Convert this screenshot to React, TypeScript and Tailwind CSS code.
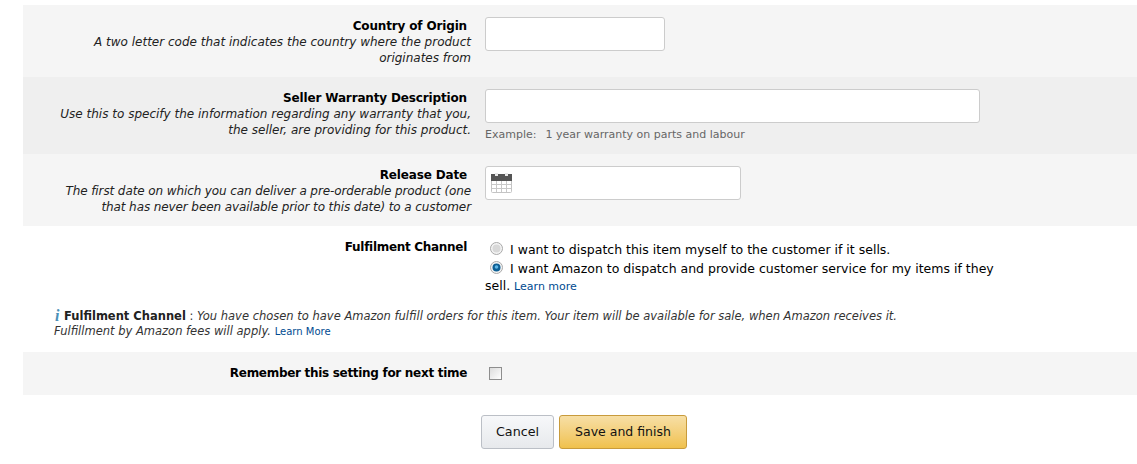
const font = { fontFamily: '"DejaVu Sans", Verdana, sans-serif' }

function Label({ title, children, tight }: { title: string; children?: React.ReactNode; tight?: boolean }) {
  return (
    <div className="w-[448px] shrink-0 pt-[1px] text-right text-[12px] leading-4 text-[#111]">
      <div className={tight ? 'pr-1 font-bold tracking-[-0.3px] text-black' : 'pr-1 font-bold tracking-[-0.15px] text-black'}>
        {title}
      </div>
      {children && <div className="italic text-[#222]">{children}</div>}
    </div>
  )
}

function Calendar() {
  return (
    <svg width="21" height="21" viewBox="0 0 21 21" className="shrink-0">
      <rect x="0.5" y="2.5" width="20" height="18" rx="1" fill="#fff" stroke="#c4c4c4" />
      <rect x="0" y="2" width="21" height="7" fill="#555" />
      <rect x="4" y="1" width="3" height="3" fill="#e8e8e8" />
      <rect x="14" y="1" width="3" height="3" fill="#e8e8e8" />
      <path d="M5.5 9v11M10.5 9v11M15.5 9v11M1 12.5h19M1 16.5h19" stroke="#c8c8c8" fill="none" />
    </svg>
  )
}

function Radio({ checked }: { checked?: boolean }) {
  return (
    <svg width="13" height="13" viewBox="0 0 13 13" className="absolute top-[1px] left-[5px]">
      <circle cx="6.5" cy="6.5" r="6" fill="#f4f4f4" stroke="#a8a8a8" />
      {checked ? (
        <>
          <circle cx="6.5" cy="6.5" r="4" fill="#0d5f94" />
          <circle cx="6.5" cy="6" r="1.8" fill="#5db6e6" />
        </>
      ) : (
        <circle cx="6.5" cy="6.5" r="4" fill="#d8d8d8" />
      )}
    </svg>
  )
}

export default function App() {
  return (
    <div className="h-[464px] w-[1137px] overflow-hidden bg-white pt-[5px]" style={font}>
      <div className="ml-[23px]">
        <div className="flex h-[72px] gap-[14px] bg-[#f5f5f5] pt-[12px]">
          <Label title="Country of Origin">
            A two letter code that indicates the country where the product
            <br />
            originates from
          </Label>
          <input className="h-[34px] w-[180px] rounded-[3px] border border-[#ccc] bg-white" />
        </div>

        <div className="flex h-[77px] gap-[14px] bg-[#efefef] pt-[12px]">
          <Label title="Seller Warranty Description">
            Use this to specify the information regarding any warranty that you,
            <br />
            the seller, are providing for this product.
          </Label>
          <div>
            <input className="block h-[34px] w-[495px] rounded-[3px] border border-[#ccc] bg-white" />
            <div className="mt-[5px] text-[11px] leading-[14px] text-[#666]">
              <span className="mr-[2px]">Example:</span>&nbsp; 1 year warranty on parts and labour
            </div>
          </div>
        </div>

        <div className="flex h-[72px] gap-[14px] bg-[#f5f5f5] pt-[12px]">
          <Label title="Release Date">
            <span className="tracking-[-0.1px]">
              The first date on which you can deliver a pre-orderable product (one
              <br />
              that has never been available prior to this date) to a customer
            </span>
          </Label>
          <div className="flex h-[34px] w-[256px] items-start rounded-[3px] border border-[#ccc] bg-white pt-[5px] pl-[5px]">
            <Calendar />
          </div>
        </div>

        <div className="flex gap-[14px] pt-[12px]">
          <Label title="Fulfilment Channel" tight />
          <div className="w-[510px] pt-[3px] text-[12.5px] leading-[17px] text-black">
            <div className="relative indent-[25px]">
              <Radio />
              I want to dispatch this item myself to the customer if it sells.
            </div>
            <div className="relative mt-[2px] indent-[25px]">
              <Radio checked />
              I want Amazon to dispatch and provide customer service for my items if they sell.{' '}
              <a className="text-[11px] leading-none text-[#004b91]">Learn more</a>
            </div>
          </div>
        </div>
      </div>

      <div className="mt-[14px] ml-[54px] text-[11.5px] leading-[16px] text-[#333]">
        <div className="h-[15px] whitespace-nowrap">
          <span className="inline-block h-[15px] w-[10px] pl-[1px] align-top font-['Liberation_Serif',serif] text-[16px] leading-[16px] font-bold text-[#4a90b8] italic">
            i
          </span>
          <b className="text-[#222]">Fulfilment Channel</b> : <i>You have chosen to have Amazon fulfill orders for this item. Your item will be available for sale, when Amazon receives it.</i>
        </div>
        <div>
          <i>Fulfillment by Amazon fees will apply.</i>{' '}
          <a className="text-[10px] leading-none text-[#004b91]">Learn More</a>
        </div>
      </div>

      <div className="mt-[13px] ml-[23px] flex h-[43px] gap-[14px] bg-[#f5f5f5] pt-[12px]">
        <Label title="Remember this setting for next time" tight />
        <div className="mt-[3px] ml-[4px] h-[13px] w-[13px] border border-[#8e8e8e] bg-gradient-to-br from-[#dcdcdc] to-[#fff]" />
      </div>

      <div className="mt-[20px] ml-[481px] flex gap-[5px]">
        <button className="h-[34px] w-[73px] rounded-[3px] border border-[#bbbfc6] bg-gradient-to-b from-[#f7f8fa] to-[#e7e9ec] text-[12.7px] text-[#111]">
          Cancel
        </button>
        <button className="h-[34px] w-[128px] rounded-[3px] border border-[#c89b3c] bg-gradient-to-b from-[#f7dfa5] to-[#f0c14b] text-[12.5px] text-[#111]">
          Save and finish
        </button>
      </div>
    </div>
  )
}
